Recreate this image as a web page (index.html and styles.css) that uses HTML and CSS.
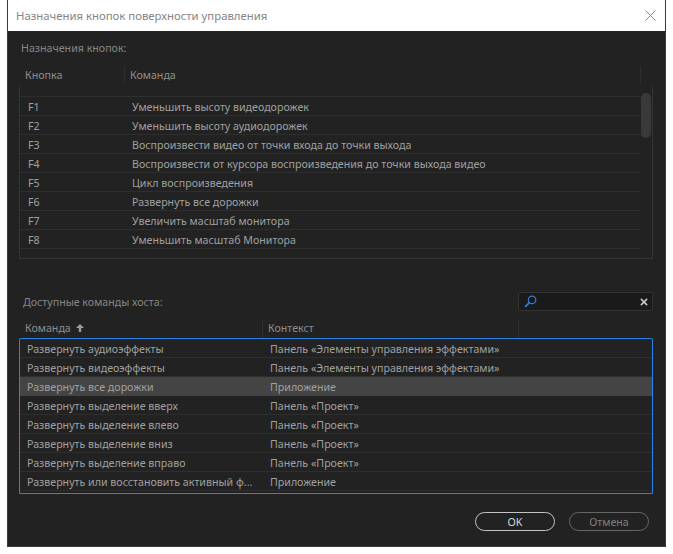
FILE: index.html
```html
<!DOCTYPE html>
<html lang="ru">

<head>
    <meta charset="UTF-8">
    <title>Назначения кнопок поверхности управления</title>
    <link rel="stylesheet" href="styles.css">
</head>

<body>
    <div class="window">
        <div class="titlebar">
            <span class="title">Назначения кнопок поверхности управления</span>
            <svg class="close" width="11" height="11" viewBox="0 0 11 11">
                <path d="M.5.5l10 10M10.5.5l-10 10" stroke="#8a8a8a" fill="none" />
            </svg>
        </div>

        <div class="content">
            <div class="section-label top-label">Назначения кнопок:</div>

            <div class="head head-top">
                <span class="head-cell first">Кнопка</span>
                <span class="head-cell sep">Команда</span>
                <span class="head-cell sep"></span>
            </div>

            <div class="list-top">
                <div class="rows">
                    <div class="row row-top"><span>F1</span><span>Уменьшить высоту видеодорожек</span></div>
                    <div class="row row-top"><span>F2</span><span>Уменьшить высоту аудиодорожек</span></div>
                    <div class="row row-top"><span>F3</span><span>Воспроизвести видео от точки входа до точки выхода</span></div>
                    <div class="row row-top"><span>F4</span><span>Воспроизвести от курсора воспроизведения до точки выхода видео</span></div>
                    <div class="row row-top"><span>F5</span><span>Цикл воспроизведения</span></div>
                    <div class="row row-top"><span>F6</span><span>Развернуть все дорожки</span></div>
                    <div class="row row-top"><span>F7</span><span>Увеличить масштаб монитора</span></div>
                    <div class="row row-top"><span>F8</span><span>Уменьшить масштаб Монитора</span></div>
                </div>
                <div class="scrollbar"><div class="thumb"></div></div>
            </div>

            <div class="host-bar">
                <span class="section-label">Доступные команды хоста:</span>
                <div class="search">
                    <svg width="13" height="13" viewBox="0 0 14 14">
                        <circle cx="8.7" cy="5.3" r="4" stroke="#2f7fd8" stroke-width="1.3" fill="none" />
                        <path d="M6 8L1.2 12.8" stroke="#2f7fd8" stroke-width="2" fill="none" />
                    </svg>
                    <svg width="8" height="8" viewBox="0 0 9 9">
                        <path d="M1 1l7 7M8 1L1 8" stroke="#c8c8c8" stroke-width="1.7" fill="none" />
                    </svg>
                </div>
            </div>

            <div class="head head-host">
                <span class="head-cell first">Команда
                    <svg class="sort" width="8" height="8" viewBox="0 0 8 8">
                        <path d="M4 0L8 4H5.2V8H2.8V4H0z" fill="#9a9a9a" />
                    </svg>
                </span>
                <span class="head-cell sep">Контекст</span>
                <span class="head-cell sep"></span>
            </div>

            <div class="list-host">
                <div class="row row-host"><span>Развернуть аудиоэффекты</span><span>Панель «Элементы управления эффектами»</span></div>
                <div class="row row-host"><span>Развернуть видеоэффекты</span><span>Панель «Элементы управления эффектами»</span></div>
                <div class="row row-host selected"><span>Развернуть все дорожки</span><span>Приложение</span></div>
                <div class="row row-host"><span>Развернуть выделение вверх</span><span>Панель «Проект»</span></div>
                <div class="row row-host"><span>Развернуть выделение влево</span><span>Панель «Проект»</span></div>
                <div class="row row-host"><span>Развернуть выделение вниз</span><span>Панель «Проект»</span></div>
                <div class="row row-host"><span>Развернуть выделение вправо</span><span>Панель «Проект»</span></div>
                <div class="row row-host"><span>Развернуть или восстановить активный ф...</span><span>Приложение</span></div>
            </div>

            <div class="buttons">
                <button class="btn btn-ok">OK</button>
                <button class="btn btn-cancel">Отмена</button>
            </div>
        </div>
    </div>
</body>

</html>
```

FILE: styles.css
```css
body {
    margin: 0;
    background-color: #fff;
    font-family: "Noto Sans", sans-serif;
    font-size: 10.65px;
    color: #a0a0a0;
}

.window {
    width: 659px;
    height: 547px;
    margin-left: 7px;
    border-left: 1px solid #3a3a3a;
    border-right: 1px solid #3a3a3a;
    border-bottom: 1px solid #3a3a3a;
    box-sizing: border-box;
    background-color: #222;
}

.titlebar {
    height: 31px;
    padding: 0 9px 0 8px;
    background-color: #fff;
    display: flex;
    align-items: center;
    justify-content: space-between;
}

.title {
    font-size: 11.35px;
    color: #858585;
}

.content {
    padding: 0 12px 0 11px;
}

.section-label {
    color: #868686;
}

.top-label {
    height: 17px;
    padding: 9px 0 0 2px;
    line-height: 17px;
}

.head {
    display: grid;
    height: 18px;
    line-height: 18px;
    color: #8e8e8e;
}

.head-top {
    margin-top: 9px;
    grid-template-columns: 105px 516px 1fr;
}

.head-host {
    margin-top: 9px;
    line-height: 17px;
    grid-template-columns: 243px 256px 1fr;
}

.head-cell {
    padding-left: 5px;
    white-space: nowrap;
}

.head-cell.first {
    padding-left: 6px;
}

.sep {
    border-left: 1px solid #2e2e2e;
}

.sort {
    margin-left: 2px;
}

.list-top {
    height: 173px;
    margin-top: 2px;
    box-sizing: border-box;
    border: 1px solid #353535;
    border-top-color: transparent;
    display: flex;
}

.rows {
    width: 621px;
    padding-top: 9px;
}

.row {
    display: grid;
    height: 19px;
    padding-top: 1px;
    line-height: 19px;
    box-sizing: border-box;
    border-bottom: 1px solid #2e2e2e;
    white-space: nowrap;
}

.row span {
    overflow: hidden;
}

.rows .row:first-child {
    border-top: 1px solid #2e2e2e;
    height: 20px;
}

.row-top {
    grid-template-columns: 104px 1fr;
    padding-left: 8px;
    color: #a0a0a0;
}

.scrollbar {
    width: 11px;
    padding: 6px 0 0 0;
}

.thumb {
    width: 10px;
    height: 45px;
    border-radius: 5px;
    background-color: #393939;
}

.host-bar {
    height: 19px;
    margin-top: 33px;
    padding-left: 4px;
    display: flex;
    align-items: center;
    justify-content: space-between;
}

.search {
    width: 135px;
    height: 19px;
    padding: 0 4px 0 5px;
    box-sizing: border-box;
    border: 1px solid #333;
    border-radius: 2px;
    background-color: #1a1a1a;
    display: flex;
    align-items: center;
    justify-content: space-between;
}

.list-host {
    height: 156px;
    box-sizing: border-box;
    border: 1px solid #2a84e8;
    border-radius: 2px 2px 0 0;
}

.row-host {
    grid-template-columns: 243px 1fr;
    padding-left: 7px;
    color: #a0a0a0;
}

.selected {
    background-color: #444;
    border-bottom-color: #444;
}

.buttons {
    margin-top: 18px;
    padding-right: 4px;
    display: flex;
    justify-content: flex-end;
    gap: 14px;
}

.btn {
    width: 80px;
    height: 19px;
    padding: 0;
    border-radius: 10px;
    background-color: transparent;
    font-family: "Noto Sans", sans-serif;
    font-size: 10.65px;
}

.btn-ok {
    border: 1px solid #c4c4c4;
    color: #d8d8d8;
}

.btn-cancel {
    border: 1px solid #666;
    color: #808080;
}
```
